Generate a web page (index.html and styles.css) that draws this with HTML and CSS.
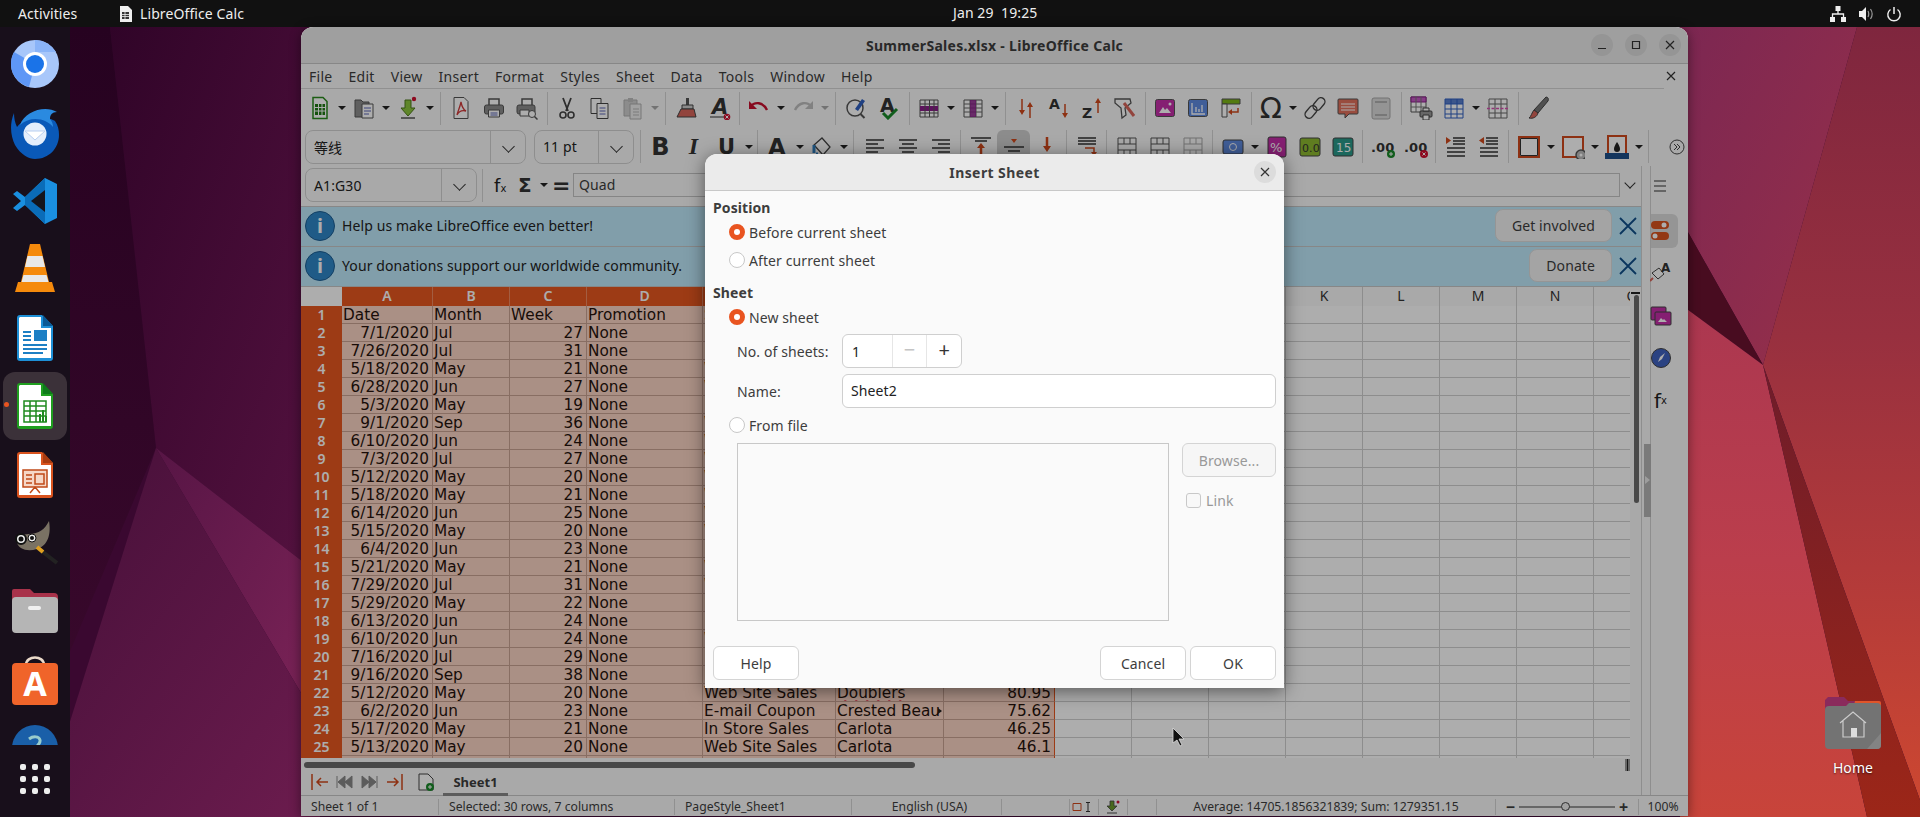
FILE: index.html
```html
<!DOCTYPE html>
<html>
<head>
	<title>SummerSales.xlsx - LibreOffice Calc</title>
	<meta charset="utf-8">
	<link rel="stylesheet" href="styles.css">
</head>
<body>
<svg class="sprite" width="0" height="0">
	<defs>
		<symbol id="i-new" viewBox="0 0 24 24"><path d="M5 1.500h10l4 4v17H5z" fill="#fff" stroke="#2a8a1c" stroke-width="1.500"/><path d="M7 8h10v11H7z" fill="#1f7a14"/><path d="M7 11.500h10M7 15h10M10.500 8v11M14 8v11" stroke="#fff"/></symbol>
		<symbol id="i-open" viewBox="0 0 24 24"><path d="M3 4h6l2 2h6v15H3z" fill="#8c8c8c" stroke="#555"/><path d="M10 8h11v14H10z" fill="#fff" stroke="#555"/><path d="M12 12h7M12 15h7M12 18h5" stroke="#5a64b4"/></symbol>
		<symbol id="i-save" viewBox="0 0 24 24"><path d="M9 4h6v8h4l-7 8-7-8h4z" fill="#8cc63f" stroke="#4f7a1c"/><path d="M5 22h14" stroke="#555" stroke-width="1.500"/><circle cx="18" cy="3" r="2.200" fill="#d01030"/></symbol>
		<symbol id="i-pdf" viewBox="0 0 24 24"><path d="M5 1.500h10l4 4v17H5z" fill="#fff" stroke="#555"/><path d="M12 6c1 5 3 8 5 9-4-1-7 0-9 4 1-4 3-8 4-13z" fill="none" stroke="#d03a3a" stroke-width="1.300"/></symbol>
		<symbol id="i-print" viewBox="0 0 24 24"><path d="M7 9V3h10v6" fill="#fff" stroke="#555" stroke-width="1.500"/><rect x="2.500" y="9" width="19" height="9" rx="2" fill="#8c8c8c" stroke="#555"/><path d="M6.500 14h11v7h-11z" fill="#fff" stroke="#555"/><path d="M8.500 17h7M8.500 19h7" stroke="#5a64b4"/></symbol>
		<symbol id="i-preview" viewBox="0 0 24 24"><path d="M7 9V3h10v6" fill="#fff" stroke="#555" stroke-width="1.500"/><rect x="2" y="9" width="18" height="9" rx="2" fill="#8c8c8c" stroke="#555"/><path d="M5 14h9v6H5z" fill="#fff" stroke="#555"/><circle cx="17" cy="18" r="3.500" fill="#fff" stroke="#555"/><path d="M19.500 20.500l3 3" stroke="#555" stroke-width="1.500"/></symbol>
		<symbol id="i-cut" viewBox="0 0 24 24"><path d="M8 2l5 13M16 2l-5 13" stroke="#444" stroke-width="1.800"/><circle cx="8" cy="19" r="3" fill="none" stroke="#444" stroke-width="1.600"/><circle cx="16" cy="19" r="3" fill="none" stroke="#444" stroke-width="1.600"/></symbol>
		<symbol id="i-copy" viewBox="0 0 24 24"><path d="M3 2.500h10v15H3z" fill="#fff" stroke="#444"/><path d="M9 7.500h11v15H9z" fill="#fff" stroke="#444"/><path d="M11.500 12h6M11.500 15h6M11.500 18h6" stroke="#5a64b4"/></symbol>
		<symbol id="i-paste" viewBox="0 0 24 24"><g opacity=".45"><path d="M3 4h13v16H3z" fill="#999" stroke="#555"/><path d="M7 2h5v4H7z" fill="#777"/><path d="M9 8h11v15H9z" fill="#ddd" stroke="#555"/><path d="M12 13h6M12 16h6M12 19h6" stroke="#666"/></g></symbol>
		<symbol id="i-clone" viewBox="0 0 24 24"><path d="M12 2h3v7h-3z" fill="#555"/><path d="M8 9h11v4H8z" fill="#ccc" stroke="#444"/><path d="M7 13h13l2 8H3z" fill="#d8655a" stroke="#444"/></symbol>
		<symbol id="i-clear" viewBox="0 0 24 24"><text x="5" y="18" font-family="DejaVu Sans" font-size="21" font-style="italic" font-weight="700" fill="#333">A</text><path d="M3 21h15" stroke="#333" stroke-width="1.200"/><circle cx="20" cy="21" r="3.300" fill="#d01030"/><path d="M18.500 19.500l3 3M21.500 19.500l-3 3" stroke="#fff"/></symbol>
		<symbol id="i-undo" viewBox="0 0 24 24"><path d="M3 11c5-6 13-5 17 3" fill="none" stroke="#c8102e" stroke-width="2.400"/><path d="M2 5v8h8z" fill="#c8102e"/></symbol>
		<symbol id="i-redo" viewBox="0 0 24 24"><g opacity=".45"><path d="M21 11c-5-6-13-5-17 3" fill="none" stroke="#777" stroke-width="2.400"/><path d="M22 5v8h-8z" fill="#777"/></g></symbol>
		<symbol id="i-find" viewBox="0 0 24 24"><circle cx="11" cy="12" r="8" fill="#fff" stroke="#555" stroke-width="1.500"/><path d="M16.500 18l4 4" stroke="#555" stroke-width="2"/><path d="M11 13l7-10 3 2-7 10z" fill="#2f5fc0"/></symbol>
		<symbol id="i-spell" viewBox="0 0 24 24"><text x="3" y="16" font-family="DejaVu Sans" font-size="19" font-weight="700" fill="#333">A</text><path d="M6 17l5 5 9-9" fill="none" stroke="#1a8a2a" stroke-width="3"/></symbol>
		<symbol id="i-rows" viewBox="0 0 24 24"><path d="M3 4h18v17H3z" fill="#fff" stroke="#555"/><path d="M3 10h18v5H3z" fill="#8a1c8a"/><path d="M8 4v17M12.500 4v17M17 4v17M3 8h18M3 17h18" stroke="#555"/></symbol>
		<symbol id="i-cols" viewBox="0 0 24 24"><path d="M3 4h18v17H3z" fill="#fff" stroke="#555"/><path d="M3 8h18M3 12h18M3 16h18M9 4v17M15 4v17" stroke="#666"/><path d="M9 4h6v17H9z" fill="#8a1c8a" opacity=".85"/></symbol>
		<symbol id="i-sort" viewBox="0 0 24 24"><path d="M8 3v14M16 8v14" stroke="#d0491c" stroke-width="1.500"/><path d="M5 14l3 5 3-5zM13 11l3-5 3 5z" fill="#d0491c"/></symbol>
		<symbol id="i-az" viewBox="0 0 24 24"><text x="2" y="13" font-family="DejaVu Sans" font-size="14" font-weight="700" fill="#333">A</text><path d="M18 8v12" stroke="#d0491c" stroke-width="1.500"/><path d="M15 17l3 5 3-5z" fill="#d0491c"/></symbol>
		<symbol id="i-za" viewBox="0 0 24 24"><text x="2" y="22" font-family="DejaVu Sans" font-size="14" font-weight="700" fill="#333">Z</text><path d="M18 5v12" stroke="#d0491c" stroke-width="1.500"/><path d="M15 7l3-5 3 5z" fill="#d0491c"/></symbol>
		<symbol id="i-filter" viewBox="0 0 24 24"><path d="M2 3h15l1 4-6 5 1 7-4 3-1-10-6-5z" fill="#fff" stroke="#555" stroke-width="1.300"/><path d="M11 7l10 13" stroke="#d8655a" stroke-width="3"/></symbol>
		<symbol id="i-image" viewBox="0 0 24 24"><rect x="2.500" y="3.500" width="19" height="17" rx="2" fill="#c42fa8" stroke="#555"/><path d="M6 17l4-6 2 3 2-2 4 5z" fill="#fff"/><circle cx="17" cy="8" r="1.500" fill="#fff"/></symbol>
		<symbol id="i-chart" viewBox="0 0 24 24"><rect x="2.500" y="3.500" width="19" height="17" rx="2" fill="#5f8be0" stroke="#555"/><path d="M6 7v11h13M10 16v-5M13 16v-3M16 16V9" fill="none" stroke="#fff" stroke-width="1.300"/></symbol>
		<symbol id="i-pivot" viewBox="0 0 24 24"><path d="M3 3h18v5H3z" fill="#7cb518" stroke="#555"/><path d="M3 8v13h5V8z" fill="#fff" stroke="#555"/><path d="M19 12v4h-8" fill="none" stroke="#d0491c" stroke-width="1.500"/><path d="M13 13l-4 3 4 3z" fill="#d0491c"/></symbol>
		<symbol id="i-link" viewBox="0 0 24 24"><g fill="none" stroke="#444" stroke-width="1.400"><rect x="12" y="1" width="8" height="14" rx="4" transform="rotate(40 16 8)"/><rect x="4" y="9" width="8" height="14" rx="4" transform="rotate(40 8 16)"/></g></symbol>
		<symbol id="i-comment" viewBox="0 0 24 24"><path d="M3 3h18a1 1 0 0 1 1 1v13a1 1 0 0 1-1 1h-8l-4 4v-4H3a1 1 0 0 1-1-1V4a1 1 0 0 1 1-1z" fill="#e2705c" stroke="#555"/><path d="M5 8h14M5 11h14M5 14h14" stroke="#fff"/></symbol>
		<symbol id="i-header" viewBox="0 0 24 24"><g opacity=".5"><rect x="3" y="2" width="18" height="21" rx="2" fill="#bbb" stroke="#555"/><path d="M6 6h12M6 19h12" stroke="#666" stroke-width="2"/></g></symbol>
		<symbol id="i-parea" viewBox="0 0 24 24"><path d="M2 1h15v15H2z" fill="#fff" stroke="#555"/><path d="M2 1h15v5H2z" fill="#c45ac4" stroke="#8a1c8a"/><path d="M7 1v15M12 1v15M2 11h15" stroke="#777"/><rect x="11" y="15" width="12" height="6" rx="1" fill="#999" stroke="#444"/><path d="M14 12h6v3h-6zM14 19h6v5h-6z" fill="#fff" stroke="#444"/></symbol>
		<symbol id="i-freeze" viewBox="0 0 24 24"><path d="M3 3h18v19H3z" fill="#fff" stroke="#2f5fc0"/><path d="M3 3h18v5H3z" fill="#2f5fc0" opacity=".8"/><path d="M9 3v19M15 3v19M3 8h18M3 13h18M3 18h18" stroke="#2f5fc0"/></symbol>
		<symbol id="i-split" viewBox="0 0 24 24"><path d="M3 3h18v19H3z" fill="#fff" stroke="#666"/><path d="M9 3v19M15 3v19M3 8h18M3 17h18" stroke="#666"/><path d="M1 12.500h22" stroke="#d84fb0" stroke-width="1.500" stroke-dasharray="3 1.500"/></symbol>
		<symbol id="i-brush" viewBox="0 0 24 24"><path d="M20 1c2 0 3 2 2 4L12 17l-4-3z" fill="#777" stroke="#444"/><path d="M8 14l4 3c-1 4-5 6-9 5 2-1 3-6 5-8z" fill="#d8655a" stroke="#444"/></symbol>
		<symbol id="i-fontcolor" viewBox="0 0 24 24"><text x="2" y="20" font-family="DejaVu Sans" font-size="23" font-weight="700" fill="#333">A</text><path d="M2 22h20" stroke="#c8102e" stroke-width="3"/></symbol>
		<symbol id="i-bucket" viewBox="0 0 24 24"><path d="M4 10l8-7 8 9-7 8z" fill="#fff" stroke="#444" stroke-width="1.300"/><path d="M4 10v8M6 19h2" stroke="#2f7fc0" stroke-width="3"/><path d="M2 23h18" stroke="#b0c030" stroke-width="2"/></symbol>
		<symbol id="i-left" viewBox="0 0 24 24"><path d="M3 5h18M3 9h12M3 13h18M3 17h12M3 21h18" stroke="#333" stroke-width="1.500"/></symbol>
		<symbol id="i-center" viewBox="0 0 24 24"><path d="M3 5h18M6 9h12M3 13h18M6 17h12M3 21h18" stroke="#333" stroke-width="1.500"/></symbol>
		<symbol id="i-right" viewBox="0 0 24 24"><path d="M3 5h18M9 9h12M3 13h18M9 17h12M3 21h18" stroke="#333" stroke-width="1.500"/></symbol>
		<symbol id="i-vtop" viewBox="0 0 24 24"><path d="M2 3h20M6 6h12" stroke="#333" stroke-width="1.500"/><path d="M12 10v12" stroke="#d0491c" stroke-width="2.500"/><path d="M8 13l4-5 4 5z" fill="#d0491c"/></symbol>
		<symbol id="i-vmid" viewBox="0 0 24 24"><path d="M2 12h20M6 16h12" stroke="#333" stroke-width="1.500"/><path d="M9 4h6l-3 4zM9 24h6l-3-4z" fill="#d0491c"/></symbol>
		<symbol id="i-vbot" viewBox="0 0 24 24"><path d="M2 21h20" stroke="#333" stroke-width="1.500"/><path d="M12 2v12" stroke="#d0491c" stroke-width="2.500"/><path d="M8 11l4 6 4-6z" fill="#d0491c"/></symbol>
		<symbol id="i-wrap" viewBox="0 0 24 24"><path d="M3 3h18M3 6h18M3 9h18M3 22h11" stroke="#333" stroke-width="1.300"/><path d="M10 13h9v5" fill="none" stroke="#d0491c" stroke-width="1.500"/><path d="M16 17h6l-3 4z" fill="#d0491c"/></symbol>
		<symbol id="i-merge" viewBox="0 0 24 24"><path d="M3 3h18v20H3zM3 9h18M3 15h18M9 3v6M15 3v6M9 15v8M15 15v8" fill="none" stroke="#555"/></symbol>
		<symbol id="i-curr" viewBox="0 0 24 24"><rect x="2" y="5" width="20" height="14" rx="2" fill="#5f8be0" stroke="#444"/><circle cx="12" cy="12" r="3.500" fill="none" stroke="#fff"/></symbol>
		<symbol id="i-pct" viewBox="0 0 24 24"><rect x="3" y="2" width="18" height="20" rx="2" fill="#c42fa8" stroke="#444"/><text x="5" y="17" font-family="DejaVu Sans" font-size="13" fill="#fff">%</text></symbol>
		<symbol id="i-num" viewBox="0 0 24 24"><rect x="2" y="3" width="20" height="18" rx="2" fill="#8cb830" stroke="#444"/><text x="4" y="17" font-family="DejaVu Sans" font-size="11" fill="#333">0.0</text></symbol>
		<symbol id="i-date" viewBox="0 0 24 24"><rect x="2" y="3" width="20" height="18" rx="2" fill="#2a9a8a" stroke="#444"/><text x="5" y="17" font-family="DejaVu Sans" font-size="12" fill="#fff">15</text></symbol>
		<symbol id="i-decadd" viewBox="0 0 24 24"><text x="0" y="17" font-family="DejaVu Sans" font-size="13" font-weight="700" fill="#333">.00</text><circle cx="20" cy="19" r="4" fill="#1a8a2a"/><path d="M18 19h4M20 17v4" stroke="#fff"/></symbol>
		<symbol id="i-decdel" viewBox="0 0 24 24"><text x="0" y="17" font-family="DejaVu Sans" font-size="13" font-weight="700" fill="#333">.00</text><circle cx="20" cy="19" r="4" fill="#d01030"/><path d="M18.500 17.500l3 3M21.500 17.500l-3 3" stroke="#fff"/></symbol>
		<symbol id="i-indent" viewBox="0 0 24 24"><path d="M9 3h12M9 6h12M9 9h12M3 13h18M3 17h18M3 21h18" stroke="#333" stroke-width="1.300"/><path d="M2 2v7l5-3.500z" fill="#d0491c"/></symbol>
		<symbol id="i-outdent" viewBox="0 0 24 24"><path d="M9 3h12M9 6h12M9 9h12M3 13h18M3 17h18M3 21h18" stroke="#333" stroke-width="1.300"/><path d="M7 2v7L2 5.500z" fill="#d0491c"/></symbol>
		<symbol id="i-border" viewBox="0 0 24 24"><path d="M2 2h20v20H2z" fill="#fff" stroke="#d0491c" stroke-width="2"/><path d="M3.500 3.500h17v17h-17z" fill="none" stroke="#333"/></symbol>
		<symbol id="i-bstyle" viewBox="0 0 24 24"><path d="M2 2h20v20H2z" fill="#fff" stroke="#d0491c" stroke-width="2"/><circle cx="20" cy="20" r="5" fill="#bbb" stroke="#555" stroke-width="1.500"/><circle cx="20" cy="20" r="1.500" fill="#fff"/></symbol>
		<symbol id="i-bcolor" viewBox="0 0 24 24"><path d="M3 1h18v18H3z" fill="#fff" stroke="#d0491c" stroke-width="2"/><path d="M12 7c-2 3-3 5-3 7a3 3 0 0 0 6 0c0-2-1-4-3-7z" fill="#222"/><path d="M0 18h24v6H0z" fill="#1c4f8a"/></symbol>
	</defs>
</svg>

<div class="wallpaper">
	<svg viewBox="0 0 1920 817" width="1920" height="817">
		<defs>
			<linearGradient id="w1" x1="0" y1="0" x2="1" y2="1"><stop offset="0" stop-color="#300428"/><stop offset="1" stop-color="#551240"/></linearGradient>
			<linearGradient id="w2" x1="0" y1="0" x2="0" y2="1"><stop offset="0" stop-color="#260220"/><stop offset="1" stop-color="#3c0a2e"/></linearGradient>
			<linearGradient id="w3" x1="0" y1="0" x2="1" y2="1"><stop offset="0" stop-color="#571545"/><stop offset="1" stop-color="#7d2458"/></linearGradient>
			<linearGradient id="w4" x1="0" y1="0" x2="1" y2="1"><stop offset="0" stop-color="#440f38"/><stop offset="1" stop-color="#6c1c4e"/></linearGradient>
			<linearGradient id="w5" x1="0" y1="0" x2="1" y2="1"><stop offset="0" stop-color="#7c2752"/><stop offset="1" stop-color="#983049"/></linearGradient>
			<linearGradient id="w6" x1="0" y1="0" x2="0" y2="1"><stop offset="0" stop-color="#7f263e"/><stop offset=".4" stop-color="#98303f"/><stop offset=".7" stop-color="#b23a3a"/><stop offset="1" stop-color="#cc4731"/></linearGradient>
			<linearGradient id="w7" x1="0" y1="0" x2="0" y2="1"><stop offset="0" stop-color="#ab3750"/><stop offset=".5" stop-color="#bb3e4c"/><stop offset="1" stop-color="#c8443a"/></linearGradient>
			<linearGradient id="w8" x1="0" y1="0" x2="0" y2="1"><stop offset="0" stop-color="#6e1c2a"/><stop offset="1" stop-color="#9c2618"/></linearGradient>
		</defs>
		<path d="M0 0h1920v817H0z" fill="#3a0830"/>
		<path d="M110 27H320V575L156 448z" fill="url(#w1)"/>
		<path d="M0 27H110L156 448 0 817z" fill="url(#w2)"/>
		<path d="M156 448L320 575V725z" fill="url(#w3)"/>
		<path d="M156 448L320 725V817H40z" fill="url(#w4)"/>
		<path d="M1680 27H1857L1763 365 1680 218z" fill="url(#w5)"/>
		<path d="M1857 27H1920V800L1763 365z" fill="url(#w6)"/>
		<path d="M1680 218L1763 365 1680 304z" fill="#480c20"/>
		<path d="M1680 304L1763 365 1867 817H1680z" fill="url(#w7)"/>
		<path d="M1763 365L1920 800V817H1867z" fill="url(#w8)"/>
	</svg>
</div>

<header class="topbar">
	<div class="top-left">
		<span class="activities">Activities</span>
		<span class="top-app">
			<svg width="13" height="16" viewBox="0 0 13 16"><path d="M1 0h8l4 4v12H1z" fill="#eee"/><path d="M3 6h7v7H3z" fill="#333"/><path d="M3 8.500h7M3 10.500h7M6 6v7" stroke="#eee" stroke-width=".8"/></svg>
			LibreOffice Calc
		</span>
	</div>
	<div class="clock">Jan 29&nbsp; 19:25</div>
	<div class="top-right">
		<svg width="16" height="16" viewBox="0 0 16 16"><path d="M5.500 0h5v5h-5zM0 11h5v5H0zM11 11h5v5h-5z" fill="#eee"/><path d="M8 5v3M2.500 11V8h11v3" fill="none" stroke="#eee" stroke-width="1.300"/></svg>
		<svg width="16" height="16" viewBox="0 0 16 16"><path d="M1 5h3l4-4v14l-4-4H1z" fill="#eee"/><path d="M10 5c1 2 1 4 0 6M12.500 3c2 3 2 7 0 10" fill="none" stroke="#999" stroke-width="1.200"/></svg>
		<svg width="16" height="16" viewBox="0 0 16 16"><path d="M8 1v7" stroke="#eee" stroke-width="1.500"/><path d="M4.500 3.500a6.200 6.200 0 1 0 7 0" fill="none" stroke="#eee" stroke-width="1.400"/></svg>
	</div>
</header>

<div class="desk">
	<nav class="dock">
		<div class="dock-list">
			<div class="dock-item">
				<svg width="48" height="48" viewBox="0 0 48 48"><circle cx="24" cy="24" r="24" fill="#a8c7fa"/><path d="M24 24L3 12A24 24 0 0 0 18 47z" fill="#5e97f6"/><path d="M24 0a24 24 0 0 1 21 12H24z" fill="#8ab4f8"/><circle cx="24" cy="24" r="12" fill="#fff"/><circle cx="24" cy="24" r="9" fill="#1a73e8"/></svg>
			</div>
			<div class="dock-item">
				<svg width="48" height="52" viewBox="0 0 48 52"><path d="M3 6C-2 18 0 30 4 38c6 10 14 14 20 14 14 0 24-11 24-24 0-5-1-10-4-14-4-4-30-6-38 6C4 16 3 11 3 6z" fill="#0a59b8"/><path d="M9 18C14 4 34-2 46 5c-5 0-7 3-7 7 2 2 3 5 3 8-6-8-22-12-33-2z" fill="#2a8ae0"/><circle cx="24" cy="27" r="11.500" fill="#e4eefb"/><path d="M14 24l10 9 10-9z" fill="#fff" stroke="#b8cff0"/></svg>
			</div>
			<div class="dock-item">
				<svg width="44" height="46" viewBox="0 0 44 46"><path d="M32 0l12 6v34l-12 6L12 27l-8 6-4-3 8-7-8-7 4-3 8 6z" fill="#1a8fe0"/><path d="M32 0v46L12 27v-8z" fill="#0a6cb8"/><path d="M32 12L18 23l14 11z" fill="#15151c"/></svg>
			</div>
			<div class="dock-item">
				<svg width="40" height="50" viewBox="0 0 40 50"><path d="M15 0h10l9 38H6z" fill="#f58a0c"/><path d="M12.500 12h15l2.500 11H10z" fill="#e8e8e8"/><path d="M8.500 31h23l2 7h-27z" fill="#e8e8e8"/><path d="M3 38h34l3 10H0z" fill="#f58a0c"/></svg>
			</div>
			<div class="dock-item">
				<svg width="36" height="46" viewBox="0 0 36 46"><path d="M3 0h22l11 11v32a3 3 0 0 1-3 3H3a3 3 0 0 1-3-3V3a3 3 0 0 1 3-3z" fill="#1d8fd6"/><path d="M3 2h21v11h10v30H2V3z" fill="#fff"/><path d="M26 0l10 11H26z" fill="#0a5a96"/><path d="M6 17h8M6 21h8M6 25h8M6 30h24M6 34h24M6 38h20" stroke="#1d7fc4" stroke-width="2"/><rect x="17" y="15" width="13" height="11" fill="#1d7fc4"/></svg>
			</div>
			<div class="dock-item active">
				<svg width="36" height="46" viewBox="0 0 36 46"><path d="M3 0h22l11 11v32a3 3 0 0 1-3 3H3a3 3 0 0 1-3-3V3a3 3 0 0 1 3-3z" fill="#1f9e1f"/><path d="M3 2h21v11h10v30H2V3z" fill="#fff"/><path d="M26 0l10 11H26z" fill="#0e7a1a"/><path d="M7 18h22v21H7zM7 23h22M7 28h22M7 33h22M13 18v21M19 18v21" fill="none" stroke="#1f8a1f" stroke-width="1.500"/><path d="M22 39V31h2v8zM25 39V27h2v12zM28 39v-6h2v6z" fill="#1f8a1f"/></svg>
			</div>
			<div class="dock-item">
				<svg width="36" height="46" viewBox="0 0 36 46"><path d="M3 0h22l11 11v32a3 3 0 0 1-3 3H3a3 3 0 0 1-3-3V3a3 3 0 0 1 3-3z" fill="#d9531e"/><path d="M3 2h21v11h10v30H2V3z" fill="#fff"/><path d="M26 0l10 11H26z" fill="#a83c10"/><path d="M6 18h24v17H6z" fill="#f6d7c6" stroke="#c04a18" stroke-width="1.500"/><path d="M9 23h6M9 27h6M9 31h6M18 22h9v10h-9zM18 35l-5 6M18 35l5 6" fill="none" stroke="#c04a18" stroke-width="1.500"/></svg>
			</div>
			<div class="dock-item">
				<svg width="48" height="44" viewBox="0 0 48 44"><path d="M38 0c2 12 0 24-12 28-10 3-18 0-20-6 0-6 6-9 12-9 10 0 16-5 20-13z" fill="#7a7264"/><circle cx="10" cy="18" r="5" fill="#eee" stroke="#111" stroke-width="2"/><circle cx="10" cy="18" r="2.500" fill="#111"/><circle cx="21" cy="17" r="4" fill="#eee" stroke="#111"/><circle cx="21" cy="17" r="2" fill="#111"/><path d="M28 28l18 14" stroke="#222" stroke-width="4"/><path d="M26 26l6 5" stroke="#e0a020" stroke-width="4"/></svg>
			</div>
			<div class="dock-item">
				<svg width="46" height="44" viewBox="0 0 46 44"><path d="M2 0h16l4 4h20a4 4 0 0 1 4 4v8H0V2a2 2 0 0 1 2-2z" fill="#a8324a"/><rect y="8" width="46" height="36" rx="4" fill="#b5b5b5"/><rect x="16" y="17" width="13" height="4" rx="2" fill="#f0f0f0"/></svg>
			</div>
			<div class="dock-item">
				<svg width="46" height="50" viewBox="0 0 46 50"><path d="M14 10c0-10 18-10 18 0" fill="none" stroke="#ead9c9" stroke-width="2.500"/><rect y="8" width="46" height="42" rx="4" fill="#f0642a"/><text x="23" y="41" font-family="Noto Sans" font-size="34" font-weight="700" fill="#fff" text-anchor="middle">A</text></svg>
			</div>
			<div class="dock-item">
				<svg width="46" height="46" viewBox="0 0 46 46"><circle cx="23" cy="23" r="23" fill="#1a5fa8"/><path d="M17 14c4-3 10-3 11 1s-4 6-5 9" fill="none" stroke="#9cc" stroke-width="3"/></svg>
			</div>
		</div>
		<div class="dock-apps">
			<i></i><i></i><i></i><i></i><i></i><i></i><i></i><i></i><i></i>
		</div>
	</nav>
	<div class="active-dot"></div>

	<div class="home-icon">
		<svg width="56" height="52" viewBox="0 0 56 52"><path d="M3 0h16l4 4h31a2 2 0 0 1 2 2v12H0V3z" fill="#8a2a5c"/><path d="M30 4h24a2 2 0 0 1 2 2v6H28z" fill="#e0552a"/><path d="M4 9h17l3-3h28a4 4 0 0 1 4 4v38a4 4 0 0 1-4 4H4a4 4 0 0 1-4-4V13a4 4 0 0 1 4-4z" fill="#737373"/><path d="M56 36v12a4 4 0 0 1-4 4H42z" fill="#838383"/><path d="M15 26l13-11 13 11M18 24v16h21V24" fill="none" stroke="#ccc" stroke-width="1.200"/><rect x="26" y="31" width="6" height="9" fill="#ddd"/></svg>
		<span>Home</span>
	</div>

	<section class="win">
		<div class="win-title">
			<span class="win-name">SummerSales.xlsx - LibreOffice Calc</span>
			<div class="win-btns">
				<b><svg width="10" height="10" viewBox="0 0 10 10"><path d="M1 8.500h8" stroke="#333" stroke-width="1.200"/></svg></b>
				<b><svg width="10" height="10" viewBox="0 0 10 10"><path d="M1.500 1.500h7v7h-7z" fill="none" stroke="#333" stroke-width="1.200"/></svg></b>
				<b><svg width="10" height="10" viewBox="0 0 10 10"><path d="M1 1l8 8M9 1l-8 8" stroke="#333" stroke-width="1.200"/></svg></b>
			</div>
		</div>
		<div class="menubar">
			<span>File</span><span>Edit</span><span>View</span><span>Insert</span><span>Format</span><span>Styles</span><span>Sheet</span><span>Data</span><span>Tools</span><span>Window</span><span>Help</span>
			<svg class="doc-close" width="10" height="10" viewBox="0 0 10 10"><path d="M1 1l8 8M9 1l-8 8" stroke="#333" stroke-width="1.200"/></svg>
		</div>
		<div class="toolbar tb-one">
			<a class="t"><svg><use href="#i-new"/></svg></a><u></u>
			<a class="t"><svg><use href="#i-open"/></svg></a><u></u>
			<a class="t"><svg><use href="#i-save"/></svg></a><u></u><s class="w"></s>
			<a class="t"><svg><use href="#i-pdf"/></svg></a>
			<a class="t"><svg><use href="#i-print"/></svg></a>
			<a class="t"><svg><use href="#i-preview"/></svg></a><s></s>
			<a class="t"><svg><use href="#i-cut"/></svg></a>
			<a class="t"><svg><use href="#i-copy"/></svg></a>
			<a class="t"><svg><use href="#i-paste"/></svg></a><u class="off"></u><s class="w"></s>
			<a class="t"><svg><use href="#i-clone"/></svg></a>
			<a class="t"><svg><use href="#i-clear"/></svg></a><s></s>
			<a class="t"><svg><use href="#i-undo"/></svg></a><u></u>
			<a class="t"><svg><use href="#i-redo"/></svg></a><u class="off"></u><s class="w"></s>
			<a class="t"><svg><use href="#i-find"/></svg></a>
			<a class="t"><svg><use href="#i-spell"/></svg></a><s></s>
			<a class="t"><svg><use href="#i-rows"/></svg></a><u></u>
			<a class="t"><svg><use href="#i-cols"/></svg></a><u></u><s class="w"></s>
			<a class="t"><svg><use href="#i-sort"/></svg></a>
			<a class="t"><svg><use href="#i-az"/></svg></a>
			<a class="t"><svg><use href="#i-za"/></svg></a>
			<a class="t"><svg><use href="#i-filter"/></svg></a><s></s>
			<a class="t"><svg><use href="#i-image"/></svg></a>
			<a class="t"><svg><use href="#i-chart"/></svg></a>
			<a class="t"><svg><use href="#i-pivot"/></svg></a><s></s>
			<a class="t omega">Ω</a><u></u>
			<a class="t"><svg><use href="#i-link"/></svg></a>
			<a class="t"><svg><use href="#i-comment"/></svg></a>
			<a class="t"><svg><use href="#i-header"/></svg></a><s></s>
			<a class="t"><svg><use href="#i-parea"/></svg></a>
			<a class="t"><svg><use href="#i-freeze"/></svg></a><u></u>
			<a class="t"><svg><use href="#i-split"/></svg></a><s></s>
			<a class="t"><svg><use href="#i-brush"/></svg></a>
		</div>
		<div class="toolbar tb-two">
			<div class="combo font-name"><span class="cjk">等线</span><em></em></div>
			<div class="combo font-size"><span>11 pt</span><em></em></div>
			<s></s>
			<a class="t fmt bold">B</a>
			<a class="t fmt ital">I</a>
			<a class="t fmt under">U</a><u></u><s></s>
			<a class="t"><svg><use href="#i-fontcolor"/></svg></a><u></u>
			<a class="t"><svg><use href="#i-bucket"/></svg></a><u></u><s class="w"></s>
			<a class="t"><svg><use href="#i-left"/></svg></a>
			<a class="t"><svg><use href="#i-center"/></svg></a>
			<a class="t"><svg><use href="#i-right"/></svg></a><s></s>
			<a class="t"><svg><use href="#i-vtop"/></svg></a>
			<a class="t on"><svg><use href="#i-vmid"/></svg></a>
			<a class="t"><svg><use href="#i-vbot"/></svg></a><s></s>
			<a class="t"><svg><use href="#i-wrap"/></svg></a><s></s>
			<a class="t"><svg><use href="#i-merge"/></svg></a>
			<a class="t"><svg><use href="#i-merge"/></svg></a>
			<a class="t faded"><svg><use href="#i-merge"/></svg></a><s></s>
			<a class="t"><svg><use href="#i-curr"/></svg></a><u></u>
			<a class="t"><svg><use href="#i-pct"/></svg></a>
			<a class="t"><svg><use href="#i-num"/></svg></a>
			<a class="t"><svg><use href="#i-date"/></svg></a><s></s>
			<a class="t"><svg><use href="#i-decadd"/></svg></a>
			<a class="t"><svg><use href="#i-decdel"/></svg></a><s></s>
			<a class="t"><svg><use href="#i-indent"/></svg></a>
			<a class="t"><svg><use href="#i-outdent"/></svg></a><s></s>
			<a class="t"><svg><use href="#i-border"/></svg></a><u></u>
			<a class="t"><svg><use href="#i-bstyle"/></svg></a><u></u>
			<a class="t"><svg><use href="#i-bcolor"/></svg></a><u></u><s class="w"></s>
			<svg class="more" width="16" height="16" viewBox="0 0 16 16"><circle cx="8" cy="8" r="7" fill="none" stroke="#444"/><path d="M5 5l3 3-3 3M8 5l3 3-3 3" fill="none" stroke="#444"/></svg>
		</div>

		<div class="work">
			<div class="main">
				<div class="formula">
					<div class="combo name-box"><span>A1:G30</span><em></em></div>
					<s></s>
					<span class="fx">f<small>x</small></span>
					<span class="sigma">Σ</span><u></u>
					<span class="equals">=</span>
					<div class="fx-input">Quad</div>
					<i class="chev"></i>
				</div>
				<div class="infobar">
					<span class="info-dot">i</span>
					<span class="info-text">Help us make LibreOffice even better!</span>
					<span class="info-btn">Get involved</span>
					<svg class="info-x" width="18" height="18" viewBox="0 0 18 18"><path d="M1 1l16 16M17 1L1 17" stroke="#0f4f8a" stroke-width="1.800"/></svg>
				</div>
				<div class="infobar">
					<span class="info-dot">i</span>
					<span class="info-text">Your donations support our worldwide community.</span>
					<span class="info-btn">Donate</span>
					<svg class="info-x" width="18" height="18" viewBox="0 0 18 18"><path d="M1 1l16 16M17 1L1 17" stroke="#0f4f8a" stroke-width="1.800"/></svg>
				</div>
				<div class="sheet-wrap">
					<div class="sheet-clip">
						<table class="sheet">
							<colgroup><col class="c-h"><col class="c-a"><col class="c-b"><col class="c-b"><col class="c-d"><col class="c-e"><col class="c-f"><col class="c-g"><col class="c-b" span="8"></colgroup>
							<thead>
								<tr><th class="corner"></th><th class="hs">A</th><th class="hs">B</th><th class="hs">C</th><th class="hs">D</th><th class="hs">E</th><th class="hs">F</th><th class="hs">G</th><th>H</th><th>I</th><th>J</th><th>K</th><th>L</th><th>M</th><th>N</th><th>O</th></tr>
							</thead>
							<tbody>
								<tr><th>1</th><td>Date</td><td>Month</td><td>Week</td><td>Promotion</td><td>Sales Type</td><td></td><td></td><td class="blank" colspan="8"></td></tr>
								<tr><th>2</th><td class="n">7/1/2020</td><td>Jul</td><td class="n">27</td><td>None</td><td>In Store Sales</td><td></td><td></td><td class="blank" colspan="8"></td></tr>
								<tr><th>3</th><td class="n">7/26/2020</td><td>Jul</td><td class="n">31</td><td>None</td><td>E-mail Coupon</td><td></td><td></td><td class="blank" colspan="8"></td></tr>
								<tr><th>4</th><td class="n">5/18/2020</td><td>May</td><td class="n">21</td><td>None</td><td>Web Site Sales</td><td></td><td></td><td class="blank" colspan="8"></td></tr>
								<tr><th>5</th><td class="n">6/28/2020</td><td>Jun</td><td class="n">27</td><td>None</td><td>Web Site Sales</td><td></td><td></td><td class="blank" colspan="8"></td></tr>
								<tr><th>6</th><td class="n">5/3/2020</td><td>May</td><td class="n">19</td><td>None</td><td>In Store Sales</td><td></td><td></td><td class="blank" colspan="8"></td></tr>
								<tr><th>7</th><td class="n">9/1/2020</td><td>Sep</td><td class="n">36</td><td>None</td><td>Web Site Sales</td><td></td><td></td><td class="blank" colspan="8"></td></tr>
								<tr><th>8</th><td class="n">6/10/2020</td><td>Jun</td><td class="n">24</td><td>None</td><td>Web Site Sales</td><td></td><td></td><td class="blank" colspan="8"></td></tr>
								<tr><th>9</th><td class="n">7/3/2020</td><td>Jul</td><td class="n">27</td><td>None</td><td>Web Site Sales</td><td></td><td></td><td class="blank" colspan="8"></td></tr>
								<tr><th>10</th><td class="n">5/12/2020</td><td>May</td><td class="n">20</td><td>None</td><td>Web Site Sales</td><td></td><td></td><td class="blank" colspan="8"></td></tr>
								<tr><th>11</th><td class="n">5/18/2020</td><td>May</td><td class="n">21</td><td>None</td><td>Web Site Sales</td><td></td><td></td><td class="blank" colspan="8"></td></tr>
								<tr><th>12</th><td class="n">6/14/2020</td><td>Jun</td><td class="n">25</td><td>None</td><td>Web Site Sales</td><td></td><td></td><td class="blank" colspan="8"></td></tr>
								<tr><th>13</th><td class="n">5/15/2020</td><td>May</td><td class="n">20</td><td>None</td><td>Web Site Sales</td><td></td><td></td><td class="blank" colspan="8"></td></tr>
								<tr><th>14</th><td class="n">6/4/2020</td><td>Jun</td><td class="n">23</td><td>None</td><td>In Store Sales</td><td></td><td></td><td class="blank" colspan="8"></td></tr>
								<tr><th>15</th><td class="n">5/21/2020</td><td>May</td><td class="n">21</td><td>None</td><td>Web Site Sales</td><td></td><td></td><td class="blank" colspan="8"></td></tr>
								<tr><th>16</th><td class="n">7/29/2020</td><td>Jul</td><td class="n">31</td><td>None</td><td>Web Site Sales</td><td></td><td></td><td class="blank" colspan="8"></td></tr>
								<tr><th>17</th><td class="n">5/29/2020</td><td>May</td><td class="n">22</td><td>None</td><td>E-mail Coupon</td><td></td><td></td><td class="blank" colspan="8"></td></tr>
								<tr><th>18</th><td class="n">6/13/2020</td><td>Jun</td><td class="n">24</td><td>None</td><td>In Store Sales</td><td></td><td></td><td class="blank" colspan="8"></td></tr>
								<tr><th>19</th><td class="n">6/10/2020</td><td>Jun</td><td class="n">24</td><td>None</td><td>Web Site Sales</td><td></td><td></td><td class="blank" colspan="8"></td></tr>
								<tr><th>20</th><td class="n">7/16/2020</td><td>Jul</td><td class="n">29</td><td>None</td><td>In Store Sales</td><td></td><td></td><td class="blank" colspan="8"></td></tr>
								<tr><th>21</th><td class="n">9/16/2020</td><td>Sep</td><td class="n">38</td><td>None</td><td>In Store Sales</td><td></td><td></td><td class="blank" colspan="8"></td></tr>
								<tr><th>22</th><td class="n">5/12/2020</td><td>May</td><td class="n">20</td><td>None</td><td>Web Site Sales</td><td><span class="typo">Doublers</span></td><td class="n">80.95</td><td class="blank" colspan="8"></td></tr>
								<tr><th>23</th><td class="n">6/2/2020</td><td>Jun</td><td class="n">23</td><td>None</td><td>E-mail Coupon</td><td class="cut">Crested Beau</td><td class="n">75.62</td><td class="blank" colspan="8"></td></tr>
								<tr><th>24</th><td class="n">5/17/2020</td><td>May</td><td class="n">21</td><td>None</td><td>In Store Sales</td><td>Carlota</td><td class="n">46.25</td><td class="blank" colspan="8"></td></tr>
								<tr><th>25</th><td class="n">5/13/2020</td><td>May</td><td class="n">20</td><td>None</td><td>Web Site Sales</td><td>Carlota</td><td class="n">46.1</td><td class="blank" colspan="8"></td></tr>
								<tr><th></th><td></td><td></td><td></td><td></td><td></td><td></td><td></td><td class="blank" colspan="8"></td></tr>
							</tbody>
						</table>
					</div>
					<div class="vscroll"><i></i></div>
				</div>
				<div class="hscroll"><i></i></div>
				<div class="tabbar">
					<svg class="tab-nav" width="100" height="18" viewBox="0 0 100 18">
						<path d="M1 1v16M17 9H6M10 5l-4 4 4 4" fill="none" stroke="#d0491c" stroke-width="1.500"/>
						<path d="M26 3v12M41 3l-7 6 7 6zM34 3l-7 6 7 6z" fill="#888" stroke="#888"/>
						<path d="M66 3v12M51 3l7 6-7 6zM58 3l7 6-7 6z" fill="#888" stroke="#888"/>
						<path d="M91 1v16M76 9h11M83 5l4 4-4 4" fill="none" stroke="#d0491c" stroke-width="1.500"/>
					</svg>
					<svg class="tab-add" width="16" height="18" viewBox="0 0 16 18"><path d="M1 1h9l5 5v11H1z" fill="#fff" stroke="#444"/><circle cx="12" cy="14" r="4" fill="#1a8a2a"/><path d="M10 14h4M12 12v4" stroke="#fff"/></svg>
					<span class="tab">Sheet1</span>
					<i class="tab-split"></i>
				</div>
			</div>
			<aside class="sidebar">
				<svg width="14" height="12" viewBox="0 0 14 12"><path d="M0 1h12M0 6h12M0 11h12" stroke="#333"/></svg>
				<div class="side-on"><svg width="18" height="20" viewBox="0 0 18 20"><rect y="0" width="18" height="8" rx="4" fill="#d9531e"/><circle cx="13" cy="4" r="2.500" fill="#fff"/><rect y="11" width="18" height="8" rx="4" fill="#d9531e"/><circle cx="4" cy="15" r="2.500" fill="#fff"/></svg></div>
				<div class="side-btn first"><svg width="22" height="22" viewBox="0 0 22 22"><path d="M2 11l7-5 5 6-6 5z" fill="#fff" stroke="#444"/><path d="M0 19l3-3" stroke="#d8655a" stroke-width="2"/><text x="11" y="10" font-family="DejaVu Sans" font-size="12" font-weight="700" fill="#333">A</text></svg></div>
				<div class="side-btn"><svg width="22" height="20" viewBox="0 0 22 20"><rect x="1" y="1" width="15" height="13" rx="1" fill="#c42fa8" stroke="#444"/><rect x="5" y="6" width="16" height="13" rx="1" fill="#c42fa8" stroke="#444"/><path d="M8 16l3-4 2 2 1-1 3 3z" fill="#fff"/></svg></div>
				<div class="side-btn"><svg width="20" height="20" viewBox="0 0 20 20"><circle cx="10" cy="10" r="9.500" fill="#3f62c0" stroke="#444"/><path d="M14 5l-3 6-4 3 2-5z" fill="#fff"/></svg></div>
				<div class="side-btn side-fx">f<small>x</small></div>
				<i class="side-handle"></i>
			</aside>
		</div>

		<footer class="statusbar">
			<span class="st-left">Sheet 1 of 1</span>
			<span class="st-left">Selected: 30 rows, 7 columns</span>
			<span class="st-left">PageStyle_Sheet1</span>
			<span class="st-lang">English (USA)</span>
			<span></span>
			<span><svg width="24" height="12" viewBox="0 0 24 12"><path d="M1 2.500h8v7H1z" fill="none" stroke="#d0491c"/><path d="M14 1.500h4M16 1.500v9M14 10.500h4" fill="none" stroke="#333"/></svg></span>
			<span><svg width="16" height="14" viewBox="0 0 16 14"><path d="M5 1h4v5h3L7 11 2 6h3z" fill="#6a9a2a" stroke="#444" stroke-width=".8"/><path d="M2 13h10" stroke="#444"/><circle cx="13" cy="2" r="1.500" fill="#d01030"/></svg></span>
			<span></span>
			<span>Average: 14705.1856321839; Sum: 1279351.15</span>
			<span class="zoom-box"><b>−</b><i class="slider"><i></i></i><b>+</b></span>
			<span>100%</span>
		</footer>
		<div class="dim"></div>
	</section>

	<section class="dialog">
		<div class="dlg-title">
			<span>Insert Sheet</span>
			<b class="dlg-close"><svg width="10" height="10" viewBox="0 0 10 10"><path d="M1 1l8 8M9 1l-8 8" stroke="#333" stroke-width="1.200"/></svg></b>
		</div>
		<div class="dlg-body">
			<div class="dlg-head">Position</div>
			<label class="radio"><i class="dot on"></i>Before current sheet</label>
			<label class="radio"><i class="dot"></i>After current sheet</label>
			<div class="dlg-head second">Sheet</div>
			<label class="radio"><i class="dot on"></i>New sheet</label>
			<div class="field first">
				<span>No. of sheets:</span>
				<div class="spin"><span class="spin-val">1</span><span class="spin-btn off">−</span><span class="spin-btn">+</span></div>
			</div>
			<div class="field">
				<span>Name:</span>
				<div class="text-input">Sheet2</div>
			</div>
			<label class="radio from"><i class="dot"></i>From file</label>
			<div class="file-row">
				<div class="file-list"></div>
				<div class="file-side">
					<span class="btn browse">Browse...</span>
					<label class="check"><i></i>Link</label>
				</div>
			</div>
		</div>
		<div class="dlg-foot">
			<span class="btn">Help</span>
			<span class="btn push">Cancel</span>
			<span class="btn">OK</span>
		</div>
	</section>

	<svg class="cursor" width="14" height="20" viewBox="0 0 14 20"><path d="M1 1v15l4-3 3 6 2-1-3-6h5z" fill="#111" stroke="#ddd" stroke-width=".8"/></svg>
</div>
</body>
</html>
```

FILE: styles.css
```css
*{
	box-sizing: border-box;
}
html,body{
	margin: 0;
	height: 817px;
	overflow: hidden;
}
body{
	font-family: "Noto Sans", sans-serif;
	font-size: 14px;
	letter-spacing: .1px;
	color: #3d3d3d;
	background: #3a0830;
	display: flex;
	flex-direction: column;
}
.sprite{
	position: absolute;
}
.wallpaper{
	position: absolute;
	left: 0;
	top: 0;
}
.wallpaper svg{
	display: block;
}

/* top bar */
.topbar{
	position: relative;
	height: 27px;
	background: #111;
	color: #eee;
	display: flex;
	align-items: center;
	justify-content: space-between;
	flex: none;
}
.top-left{
	display: flex;
	align-items: center;
	padding-left: 18px;
}
.activities{
	width: 101px;
}
.top-app{
	display: flex;
	align-items: center;
	gap: 8px;
}
.clock{
	position: absolute;
	left: 953px;
	top: 3px;
}
.top-right{
	display: flex;
	gap: 12px;
	padding-right: 18px;
}

/* desktop */
.desk{
	position: relative;
	flex: 1;
	display: flex;
}
.dock{
	width: 70px;
	height: 790px;
	background: #180f1b;
	display: flex;
	flex-direction: column;
}
.dock-list{
	flex: 1;
	overflow: hidden;
	padding-top: 3px;
}
.dock-item{
	height: 68.400px;
	margin: 0 3px;
	border-radius: 12px;
	display: flex;
	align-items: center;
	justify-content: center;
}
.dock-item.active{
	background: #3b3139;
}
.dock-apps{
	height: 72px;
	display: grid;
	grid-template-columns: repeat(3,6px);
	grid-auto-rows: 6px;
	gap: 6px;
	justify-content: center;
	padding-top: 19px;
}
.dock-apps i{
	background: #eee;
	border-radius: 2px;
}
.active-dot{
	position: absolute;
	left: 4px;
	top: 375px;
	width: 5px;
	height: 5px;
	border-radius: 50%;
	background: #e95420;
}
.home-icon{
	position: absolute;
	left: 1812px;
	top: 670px;
	width: 82px;
	display: flex;
	flex-direction: column;
	align-items: center;
	gap: 9px;
	color: #fff;
	text-shadow: 0 1px 2px rgba(0,0,0,.6);
}

/* calc window */
.win{
	position: absolute;
	left: 301px;
	top: 0;
	width: 1387px;
	height: 789px;
	background: #fafafa;
	border-radius: 12px 12px 0 0;
	overflow: hidden;
	display: flex;
	flex-direction: column;
	box-shadow: 0 2px 12px rgba(0,0,0,.45);
}
.dim{
	position: absolute;
	inset: 0;
	background: rgba(0,0,0,.32);
}
.win-title{
	height: 37px;
	background: #ebebeb;
	border-bottom: 1px solid #c8c8c8;
	flex: none;
	display: flex;
	align-items: center;
	justify-content: center;
	font-weight: 700;
	letter-spacing: .3px;
}
.win-btns{
	position: absolute;
	right: 7px;
	top: 7px;
	display: flex;
	gap: 12px;
}
.win-btns b,.dlg-close{
	width: 22px;
	height: 22px;
	border-radius: 50%;
	background: #dcdcdc;
	display: flex;
	align-items: center;
	justify-content: center;
}
.menubar{
	position: relative;
	height: 25px;
	flex: none;
	display: flex;
	align-items: center;
	margin-right: 24px;
	border-bottom: 1px solid #d4d4d4;
	letter-spacing: .28px;
}
.menubar span{
	padding: 0 8px;
}
.doc-close{
	position: absolute;
	right: -12px;
	top: 7px;
}
.toolbar{
	display: flex;
	align-items: center;
	flex: none;
}
.tb-one{
	height: 40px;
	padding-left: 2.500px;
	padding-bottom: 2px;
}
.tb-two{
	height: 37px;
	padding-left: 4px;
	padding-bottom: 2px;
}
.t{
	width: 33px;
	height: 33px;
	flex: none;
	display: flex;
	align-items: center;
	justify-content: center;
	border-radius: 6px;
}
.t svg{
	width: 24px;
	height: 24px;
}
.t.on{
	background: #cfcfcf;
}
.t.faded{
	opacity: .5;
}
.toolbar u,.formula u{
	width: 11px;
	height: 33px;
	flex: none;
	display: flex;
	align-items: center;
	justify-content: center;
	text-decoration: none;
}
.toolbar u::after,.formula u::after{
	content: "";
	border: 4px solid transparent;
	border-top: 4px solid #222;
	border-bottom: 0;
}
.toolbar u.off::after{
	border-top-color: #aaa;
}
.toolbar s,.formula s{
	width: 7px;
	height: 33px;
	flex: none;
	background: linear-gradient(#d4d4d4,#d4d4d4) center/1px 100% no-repeat;
}
.toolbar s.w{
	width: 9px;
}
.omega{
	font-size: 29px;
	font-family: "DejaVu Sans", sans-serif;
	color: #333;
}
.fmt{
	font-family: "DejaVu Sans", sans-serif;
	font-size: 21px;
	color: #333;
}
.bold{
	font-weight: 700;
	font-size: 24px;
}
.ital{
	font-style: italic;
	font-weight: 700;
	font-size: 24px;
	font-family: "Liberation Serif", serif;
}
.under{
	font-weight: 700;
	text-decoration: underline;
}
.more{
	margin-left: 16px;
}
.combo{
	height: 34px;
	border: 1px solid #d2d2d2;
	border-radius: 8px;
	flex: none;
	display: flex;
	align-items: center;
	padding-left: 8px;
	position: relative;
}
.combo span{
	flex: 1;
	color: #222;
}
.combo em{
	width: 35px;
	height: 100%;
	border-left: 1px solid #d2d2d2;
	flex: none;
	position: relative;
}
.combo em::after,.chev{
	content: "";
	position: absolute;
	left: 13px;
	top: 11px;
	width: 8px;
	height: 8px;
	border-right: 1px solid #333;
	border-bottom: 1px solid #333;
	transform: rotate(45deg);
}
.font-name{
	width: 221px;
}
.font-size{
	width: 100px;
	margin-left: 8px;
	margin-right: 3px;
}
.cjk{
	font-family: "Noto Sans CJK SC", sans-serif;
}

/* sheet area */
.work{
	flex: 1;
	display: flex;
	min-height: 0;
}
.main{
	width: 1341px;
	display: flex;
	flex-direction: column;
	flex: none;
	border-right: 1px solid #d2d2d2;
}
.formula{
	position: relative;
	height: 40px;
	flex: none;
	display: flex;
	align-items: center;
	padding-left: 4px;
	padding-bottom: 2px;
}
.name-box{
	width: 172px;
}
.formula s{
	margin-left: 2px;
}
.fx,.side-fx{
	font-family: "DejaVu Sans", sans-serif;
	font-size: 18px;
	color: #222;
}
.fx{
	margin-left: 8px;
	width: 24px;
}
.fx small,.side-fx small{
	font-size: 10px;
}
.sigma{
	font-size: 20px;
	font-weight: 700;
	color: #333;
	width: 17px;
	font-family: "DejaVu Sans", sans-serif;
}
.formula u{
	margin-left: 3px;
}
.equals{
	font-size: 22px;
	font-weight: 700;
	color: #333;
	margin-left: 3px;
	width: 21px;
	font-family: "DejaVu Sans", sans-serif;
}
.fx-input{
	width: 1047px;
	height: 24px;
	border: 1px solid #c4c4c4;
	padding-left: 5px;
	line-height: 22px;
	background: #fafafa;
}
.chev{
	left: 1325px;
	top: 13px;
}
.infobar{
	height: 41px;
	flex: none;
	background: #bfe9fb;
	border-top: 1px solid #c8c8c8;
	border-bottom: 1px solid #c8c8c8;
	display: flex;
	align-items: center;
	padding: 0 0 2px 4px;
	color: #222;
}
.infobar + .infobar{
	height: 40px;
	border-top: 0;
}
.info-dot{
	width: 30px;
	height: 30px;
	border-radius: 50%;
	background: #2f86c8;
	border: 1px solid #1c5f94;
	color: #fff;
	font-weight: 700;
	font-size: 20px;
	text-align: center;
	line-height: 27px;
	flex: none;
}
.info-text{
	flex: 1;
	margin-left: 7px;
}
.info-btn{
	height: 33px;
	padding: 0 16px;
	border-radius: 8px;
	background: #f2f2f2;
	border: 1px solid #dcdcdc;
	display: flex;
	align-items: center;
	color: #3d3d3d;
}
.info-x{
	margin: 0 4px 0 7px;
}
.sheet-wrap{
	height: 471px;
	flex: none;
	display: flex;
}
.sheet-clip{
	width: 1329px;
	height: 471px;
	overflow: hidden;
	flex: none;
}
.sheet{
	border-collapse: separate;
	border-spacing: 0;
	table-layout: fixed;
	width: 1369px;
	background: #fff;
	font-family: "DejaVu Sans", sans-serif;
	font-size: 15.300px;
	letter-spacing: 0;
	color: #26130c;
}
.c-h{width: 41px;}
.c-a{width: 91px;}
.c-b{width: 77px;}
.c-d{width: 116px;}
.c-e{width: 133px;}
.c-f{width: 108px;}
.c-g{width: 111px;}
.sheet thead th{
	height: 19px;
	padding: 0 0 2px;
	background: #fafafa;
	border-right: 1px solid #d0d0d0;
	font-family: "Noto Sans", sans-serif;
	font-size: 14px;
	font-weight: 400;
	line-height: 16px;
	color: #333;
}
.sheet thead th.hs{
	background: #e85720;
	border-right-color: #f08a60;
	color: #fff;
	font-weight: 600;
}
.sheet thead th.corner{
	background: #fff;
	border-right-color: #fff;
}
.sheet tbody th{
	height: 18px;
	padding: 0;
	background: #e85720;
	color: #fff;
	font-family: "Noto Sans", sans-serif;
	font-size: 14px;
	font-weight: 600;
	line-height: 16px;
}
.sheet td{
	height: 18px;
	padding: 2px 1px 0 1px;
	line-height: 15px;
	border-right: 1px solid #c9a393;
	border-bottom: 1px solid #c9a393;
	white-space: nowrap;
	overflow: hidden;
	background: #fbd4c5;
}
.sheet td.n{
	text-align: right;
	padding-right: 3px;
}
.sheet td:nth-child(8){
	border-right-color: #e85720;
}
.sheet td.blank{
	padding: 0;
	background: #fff repeating-linear-gradient(to right,transparent 0 76px,#d0d0d0 76px 77px);
	border-right: 0;
	border-bottom-color: #d0d0d0;
}
.typo{
	text-decoration: underline wavy #e01030 1.500px;
	text-underline-offset: 2px;
}
.sheet td.cut{
	position: relative;
}
.cut::after{
	content: "";
	position: absolute;
	right: 1px;
	top: 6px;
	border: 3px solid transparent;
	border-left: 4px solid #222;
	border-right: 0;
}
.vscroll{
	width: 11px;
	flex: none;
	padding-right: 2px;
	padding-left: 4px;
}
.vscroll::before{
	content: "";
	display: block;
	width: 9px;
	height: 5px;
	margin: 0 0 1px -3px;
	border-bottom: 2px solid #222;
}
.vscroll i{
	display: block;
	height: 208px;
	background: #6a6a6a;
	border-radius: 3px;
}
.hscroll{
	height: 10px;
	flex: none;
	padding: 4px 0 0 3px;
}
.hscroll i{
	display: block;
	width: 611px;
	height: 6px;
	background: #6a6a6a;
	border-radius: 3px;
}
.tabbar{
	position: relative;
	flex: 1;
	display: flex;
	align-items: center;
	padding-left: 10px;
}
.tab-nav{
	width: 100px;
	flex: none;
}
.tab-add{
	margin-left: 7px;
}
.tab{
	margin-left: 9px;
	width: 65px;
	height: 28px;
	line-height: 28px;
	text-align: center;
	font-weight: 700;
	font-size: 13px;
	letter-spacing: 0;
	border-bottom: 3px solid #888;
}
.tab-split{
	position: absolute;
	left: 1324px;
	top: -9px;
	width: 5px;
	height: 12px;
	border-left: 2px solid #999;
	border-right: 2px solid #999;
	background: #222;
}
.sidebar{
	flex: 1;
	position: relative;
	margin-left: 8px;
	border-left: 1px solid #d2d2d2;
	display: flex;
	flex-direction: column;
	align-items: center;
	padding-top: 14px;
	padding-right: 18px;
	width: 36px;
}
.side-on{
	width: 27px;
	height: 34px;
	margin: 22px -8px 0 0;
	background: #dcdcdc;
	border-radius: 0 6px 6px 0;
	display: flex;
	align-items: center;
	justify-content: flex-start;
}
.side-btn{
	height: 42.500px;
	display: flex;
	align-items: center;
	justify-content: center;
}
.side-btn.first{
	margin-top: 4px;
}
.side-fx{
	font-size: 20px;
}
.side-handle{
	position: absolute;
	left: -7px;
	top: 278px;
	width: 7px;
	height: 73px;
	background: #b4b4b4;
}
.side-handle::after{
	content: "";
	position: absolute;
	left: 1px;
	top: 32px;
	border: 4px solid transparent;
	border-left: 5px solid #e8e8e8;
	border-right: 0;
}
.statusbar{
	height: 21px;
	flex: none;
	border-top: 1px solid #c8c8c8;
	padding-top: 1px;
	display: grid;
	grid-template-columns: 138px 236px 177px 150px 68px 29px 29px 29px 339px 143px 48px;
	align-items: center;
	font-size: 12.200px;
	letter-spacing: 0;
	white-space: nowrap;
}
.statusbar > span{
	height: 16px;
	line-height: 16px;
	border-right: 1px solid #d4d4d4;
	text-align: center;
	display: flex;
	align-items: center;
	justify-content: center;
}
.statusbar > span:last-of-type{
	border-right: 0;
}
.statusbar > span.st-left{
	justify-content: flex-start;
	padding-left: 10px;
}
.statusbar > span.st-lang{
	padding-left: 6px;
}
.zoom-box{
	gap: 4px;
}
.zoom-box b{
	font-size: 16px;
}
.slider{
	position: relative;
	width: 96px;
	height: 2px;
	background: #999;
}
.slider i{
	position: absolute;
	left: 42px;
	top: -4px;
	width: 9px;
	height: 9px;
	border-radius: 50%;
	border: 1px solid #444;
	background: #eee;
}

/* insert sheet dialog */
.dialog{
	position: absolute;
	left: 705px;
	top: 127px;
	width: 579px;
	height: 534px;
	background: #fafafa;
	border-radius: 12px 12px 0 0;
	box-shadow: 0 3px 18px rgba(0,0,0,.5);
	display: flex;
	flex-direction: column;
}
.dlg-title{
	position: relative;
	height: 37px;
	flex: none;
	background: #ebebeb;
	border-bottom: 1px solid #c8c8c8;
	border-radius: 12px 12px 0 0;
	display: flex;
	align-items: center;
	justify-content: center;
	font-weight: 700;
	letter-spacing: .4px;
}
.dlg-close{
	position: absolute;
	right: 8px;
	top: 7px;
}
.dlg-body{
	flex: 1;
	padding: 7px 8px 0 8px;
}
.dlg-head{
	height: 20px;
	line-height: 20px;
	font-weight: 700;
}
.dlg-head.second{
	margin-top: 9px;
}
.radio{
	height: 28px;
	display: flex;
	align-items: center;
	gap: 4px;
	padding-left: 16px;
}
.dot{
	width: 16px;
	height: 16px;
	border-radius: 50%;
	border: 1px solid #c8c8c8;
	background: #fff;
	flex: none;
}
.dot.on{
	background: #e95420;
	border: 5px solid #e95420;
	position: relative;
}
.dot.on::after{
	content: "";
	display: block;
	width: 6px;
	height: 6px;
	border-radius: 50%;
	background: #fff;
}
.field{
	display: flex;
	align-items: center;
	padding-left: 24px;
	margin-top: 6px;
}
.field.first{
	margin-top: 3px;
}
.field > span{
	width: 105px;
	flex: none;
}
.spin{
	width: 120px;
	height: 34px;
	border: 1px solid #cfcfcf;
	border-radius: 6px;
	background: #fff;
	display: flex;
	align-items: center;
}
.spin-val{
	width: 49px;
	padding-left: 9px;
	color: #222;
}
.spin-btn{
	width: 35px;
	height: 100%;
	border-left: 1px solid #e6e6e6;
	text-align: center;
	line-height: 30px;
	font-size: 20px;
	color: #333;
}
.spin-btn.off{
	color: #c4c4c4;
}
.text-input{
	flex: 1;
	height: 34px;
	line-height: 32px;
	border: 1px solid #cfcfcf;
	border-radius: 6px;
	background: #fff;
	padding-left: 8px;
	color: #222;
}
.from{
	margin-top: 3px;
}
.file-row{
	display: flex;
	padding-left: 24px;
	margin-top: 4px;
	gap: 13px;
}
.file-list{
	width: 432px;
	height: 178px;
	background: #fafafa;
	border: 1px solid #c8c8c8;
}
.file-side{
	flex: 1;
}
.btn{
	width: 86px;
	height: 34px;
	border: 1px solid #d4d4d4;
	border-radius: 6px;
	background: #fff;
	display: flex;
	align-items: center;
	justify-content: center;
	flex: none;
}
.browse{
	width: 94px;
	background: #f6f6f6;
	color: #999;
}
.check{
	display: flex;
	align-items: center;
	gap: 5px;
	margin: 14px 0 0 4px;
	color: #999;
}
.check i{
	width: 15px;
	height: 15px;
	border: 1px solid #c8c8c8;
	border-radius: 3px;
	background: #f8f8f8;
}
.dlg-foot{
	display: flex;
	gap: 4px;
	padding: 0 8px 8px 8px;
}
.push{
	margin-left: auto;
}
.cursor{
	position: absolute;
	left: 1172px;
	top: 700px;
}
```
